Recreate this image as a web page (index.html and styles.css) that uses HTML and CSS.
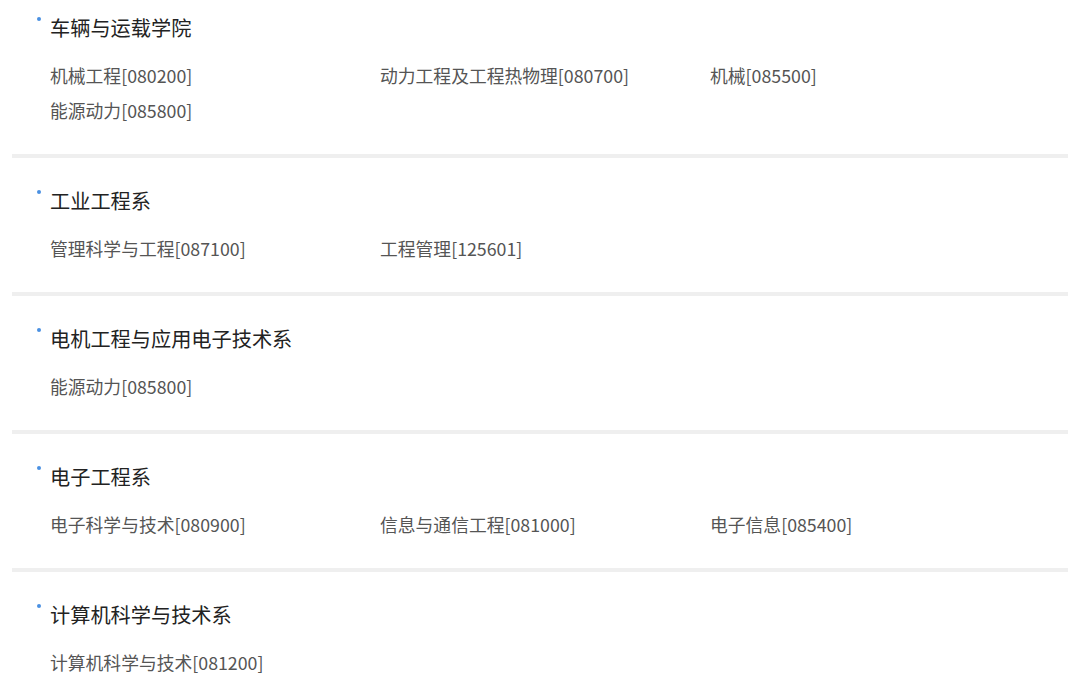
FILE: index.html
```html
<!DOCTYPE html>
<html lang="zh-CN">
<head>
<meta charset="utf-8">
<link rel="stylesheet" href="styles.css">
</head>
<body>
<div class="list">
  <section class="dept">
    <h3 class="dept-title">车辆与运载学院</h3>
    <ul class="majors">
      <li>机械工程[080200]</li>
      <li>动力工程及工程热物理[080700]</li>
      <li>机械[085500]</li>
      <li>能源动力[085800]</li>
    </ul>
  </section>
  <section class="dept">
    <h3 class="dept-title">工业工程系</h3>
    <ul class="majors">
      <li>管理科学与工程[087100]</li>
      <li>工程管理[125601]</li>
    </ul>
  </section>
  <section class="dept">
    <h3 class="dept-title">电机工程与应用电子技术系</h3>
    <ul class="majors">
      <li>能源动力[085800]</li>
    </ul>
  </section>
  <section class="dept">
    <h3 class="dept-title">电子工程系</h3>
    <ul class="majors">
      <li>电子科学与技术[080900]</li>
      <li>信息与通信工程[081000]</li>
      <li>电子信息[085400]</li>
    </ul>
  </section>
  <section class="dept">
    <h3 class="dept-title">计算机科学与技术系</h3>
    <ul class="majors">
      <li>计算机科学与技术[081200]</li>
    </ul>
  </section>
</div>
</body>
</html>
```
FILE: styles.css
```css
html, body {
  margin: 0;
  padding: 0;
  background: #ffffff;
}
body {
  font-family: "Noto Sans CJK SC", "Noto Sans", sans-serif;
  overflow: hidden;
}
.list {
  padding: 0 12px;
}
.dept {
  padding: 29px 0 26px 38px;
  border-bottom: 4px solid #efefef;
}
.dept:first-child {
  padding-top: 14px;
}
.dept-title {
  position: relative;
  margin: 0;
  font-size: 20.2px;
  line-height: 28px;
  font-weight: 400;
  color: #222222;
}
.dept-title::before {
  content: "";
  position: absolute;
  left: -13px;
  top: 3px;
  width: 4px;
  height: 4px;
  border-radius: 50%;
  background: #4a90e2;
}
.majors {
  list-style: none;
  margin: 16px 0 0;
  padding: 0;
  display: grid;
  grid-template-columns: repeat(3, 330px);
}
.majors li {
  font-size: 17.8px;
  line-height: 35px;
  color: #555555;
  white-space: nowrap;
}
```
